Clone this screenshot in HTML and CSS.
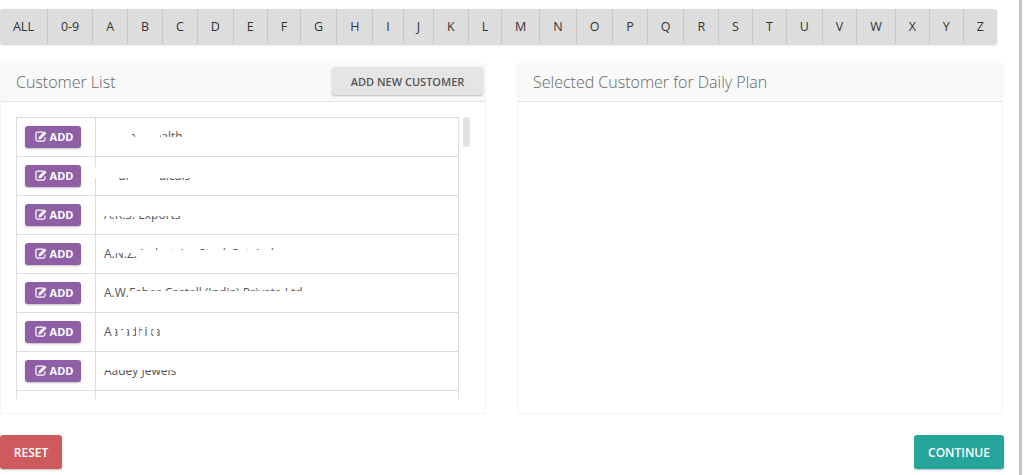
FILE: index.html
```html
<!DOCTYPE html>
<html lang="en">
<head>
<meta charset="utf-8">
<title>Daily Plan</title>
<link rel="stylesheet" href="styles.css">
</head>
<body>
<svg class="defs" width="0" height="0" aria-hidden="true"><defs>
<symbol id="edit" viewBox="0 0 13 12"><path d="M9 1.2H2.6A1.6 1.6 0 0 0 1 2.8v6.6A1.6 1.6 0 0 0 2.6 11h6.6a1.6 1.6 0 0 0 1.6-1.6V6.8" fill="none" stroke="currentColor" stroke-width="1.3"/><path d="M4.2 6.6 9.9.9a.6.6 0 0 1 .9 0l1.3 1.3a.6.6 0 0 1 0 .9L6.4 8.8 3.8 9.2z" fill="currentColor"/></symbol>
</defs></svg>
<div class="page">
<main class="main">
  <nav class="alpha">
    <a class="letter">ALL</a><a class="letter">0-9</a><a class="letter">A</a><a class="letter">B</a><a class="letter">C</a><a class="letter">D</a><a class="letter">E</a><a class="letter">F</a><a class="letter">G</a><a class="letter">H</a><a class="letter">I</a><a class="letter">J</a><a class="letter">K</a><a class="letter">L</a><a class="letter">M</a><a class="letter">N</a><a class="letter">O</a><a class="letter">P</a><a class="letter">Q</a><a class="letter">R</a><a class="letter">S</a><a class="letter">T</a><a class="letter">U</a><a class="letter">V</a><a class="letter">W</a><a class="letter">X</a><a class="letter">Y</a><a class="letter">Z</a>
  </nav>
  <div class="panels">
    <section class="panel">
      <header class="panel-head">
        <h2 class="panel-title">Customer List</h2>
        <button class="btn-new">ADD NEW CUSTOMER</button>
      </header>
      <div class="panel-body">
        <div class="scroller">
          <div class="table">
            <div class="row"><div class="cell-action"><button class="btn-add"><svg class="ico"><use href="#edit"/></svg>ADD</button></div><div class="cell-name"><span class="name">Aadina Health<i class="veil v1"></i></span></div></div>
            <div class="row"><div class="cell-action"><button class="btn-add"><svg class="ico"><use href="#edit"/></svg>ADD</button></div><div class="cell-name"><i class="nick"></i><span class="name">Aadi Ji Medicals<i class="veil v2"></i></span></div></div>
            <div class="row"><div class="cell-action"><button class="btn-add"><svg class="ico"><use href="#edit"/></svg>ADD</button></div><div class="cell-name"><span class="name">A.R.S. Exports<i class="veil v3"></i></span></div></div>
            <div class="row"><div class="cell-action"><button class="btn-add"><svg class="ico"><use href="#edit"/></svg>ADD</button></div><div class="cell-name"><span class="name">A.N.Z. Industries Stock Pvt. Ltd.<i class="veil v4"></i></span></div></div>
            <div class="row"><div class="cell-action"><button class="btn-add"><svg class="ico"><use href="#edit"/></svg>ADD</button></div><div class="cell-name"><span class="name">A.W.Faber-Castell (India) Private Ltd<i class="veil v5"></i></span></div></div>
            <div class="row"><div class="cell-action"><button class="btn-add"><svg class="ico"><use href="#edit"/></svg>ADD</button></div><div class="cell-name"><span class="name">Aaradhika<i class="veil v6"></i></span></div></div>
            <div class="row"><div class="cell-action"><button class="btn-add"><svg class="ico"><use href="#edit"/></svg>ADD</button></div><div class="cell-name"><span class="name">Aadey Jewels<i class="veil v7"></i></span></div></div>
            <div class="row"><div class="cell-action"></div><div class="cell-name"></div></div>
          </div>
          <div class="thumb"></div>
        </div>
      </div>
    </section>
    <section class="panel">
      <header class="panel-head">
        <h2 class="panel-title">Selected Customer for Daily Plan</h2>
      </header>
      <div class="panel-body"></div>
    </section>
  </div>
  <footer class="actions">
    <button class="btn-action btn-reset">RESET</button>
    <button class="btn-action btn-continue">CONTINUE</button>
  </footer>
</main>
<div class="edge"></div>
</div>
</body>
</html>
```
FILE: styles.css
```css
* { box-sizing: border-box; }
html, body { margin: 0; height: 100%; background: #fff; overflow: hidden; }
body { font-family: "Open Sans", "Liberation Sans", sans-serif; color: #444; }
.defs { position: absolute; }
.page { display: flex; height: 475px; width: 1027px; }
.main { width: 1019px; padding-top: 9px; }
.edge { width: 3px; background: #c4c4c4; margin-right: 5px; }

.alpha {
  display: flex; width: 997px; height: 35px; background: #ddd;
  border-radius: 3px; box-shadow: 0 1px 2px rgba(0,0,0,.2);
}
.letter {
  display: flex; flex: 1 0 auto; align-items: center; justify-content: center;
  padding: 0 12.4px; font-size: 12.5px; color: #333; white-space: nowrap;
  border-right: 1px solid #c6c6c6;
}
.letter:last-child { border-right: 0; }

.panels { display: grid; grid-template-columns: 486px 486px; column-gap: 31px; margin-top: 19px; width: 1003px; }
.panel { height: 351px; border: 1px solid #f5f5f5; border-top: 0; border-radius: 3px; background: #fff; display: flex; flex-direction: column; }
.panel-head {
  height: 39px; flex: none; display: flex; align-items: center; justify-content: space-between;
  background: #f9f9f9; border-bottom: 1px solid #e4e4e4; padding: 0 2px 0 15px;
}
.panel-title { margin: 0; font-size: 16px; font-weight: 300; color: #666; }
.btn-new {
  font: 600 11px "Open Sans", sans-serif; color: #555; background: #e5e5e5; border: 0;
  width: 151px; height: 28px; margin-top: -2px; border-radius: 3px; box-shadow: 0 1px 2px rgba(0,0,0,.25);
}
.panel-body { flex: 1; padding: 15px 15px 0; }
.scroller { position: relative; height: 282px; overflow: hidden; }
.table { width: 443px; border: 1px solid #ddd; border-width: 1px 1px 0; }
.row { display: flex; height: 39px; border-bottom: 1px solid #dedede; }
.cell-action { width: 79px; flex: none; border-right: 1px solid #ddd; padding: 8px 0 0 8px; }
.cell-name { flex: 1; position: relative; display: flex; align-items: center; padding: 0 0 2px 8px; }
.name { position: relative; font-size: 12px; color: #555; white-space: nowrap; }
.btn-add {
  display: flex; align-items: center; justify-content: center; gap: 3px; width: 56px; height: 22px; padding: 0 0 2px 2px;
  font: 700 11px "Open Sans", sans-serif; color: #fff; background: #8f5fa5; border: 0; border-radius: 3px;
  box-shadow: 0 1px 2px rgba(0,0,0,.25);
}
.ico { width: 12px; height: 11px; color: #fff; }
.thumb { position: absolute; top: 0; left: 447px; width: 7px; height: 30px; background: #e2e2e2; border-radius: 3px; }

.veil { position: absolute; inset: 0; display: block; }
.nick { position: absolute; left: -2px; top: 10px; width: 4px; height: 11px; background: #fff; }
.v1 { background: linear-gradient(#fff, #fff) 0 0 / 28px 100% no-repeat, linear-gradient(#fff, #fff) 31px 0 / 25px 100% no-repeat, linear-gradient(#fff, #fff) 0 9px / 100% 100% no-repeat; }
.v2 { background: linear-gradient(#fff, #fff) 0 0 / 100% 11px no-repeat, linear-gradient(#fff, #fff) 0 0 / 14px 100% no-repeat, linear-gradient(#fff, #fff) 24px 0 / 32px 100% no-repeat; }
.v3 { background: linear-gradient(#fff 0 10px, transparent 10px); }
.v4 { background: linear-gradient(#fff, #fff) 9px 0 / 25px 8px no-repeat, linear-gradient(#fff, #fff) 34px 5px / 100% 100% no-repeat; }
.v5 { background: linear-gradient(#fff, #fff) 24px 7px / 100% 100% no-repeat; }
.v6 { background: linear-gradient(#fff, #fff) 0 0 / 100% 4px no-repeat, repeating-linear-gradient(90deg, #fff 0 3px, transparent 3px 6px) 8px 0 / 100% 100% no-repeat; }
.v7 { background: linear-gradient(#fff 0 8px, transparent 8px); }

.actions { display: flex; justify-content: space-between; width: 1004px; margin-top: 21px; }
.btn-action {
  width: 62px; height: 34px; border: 0; border-radius: 3px; color: #fff;
  font: 600 12px "Open Sans", sans-serif; box-shadow: 0 1px 2px rgba(0,0,0,.25);
}
.btn-reset { background: #cd5b5d; }
.btn-continue { background: #26a69a; width: 90px; }
```
